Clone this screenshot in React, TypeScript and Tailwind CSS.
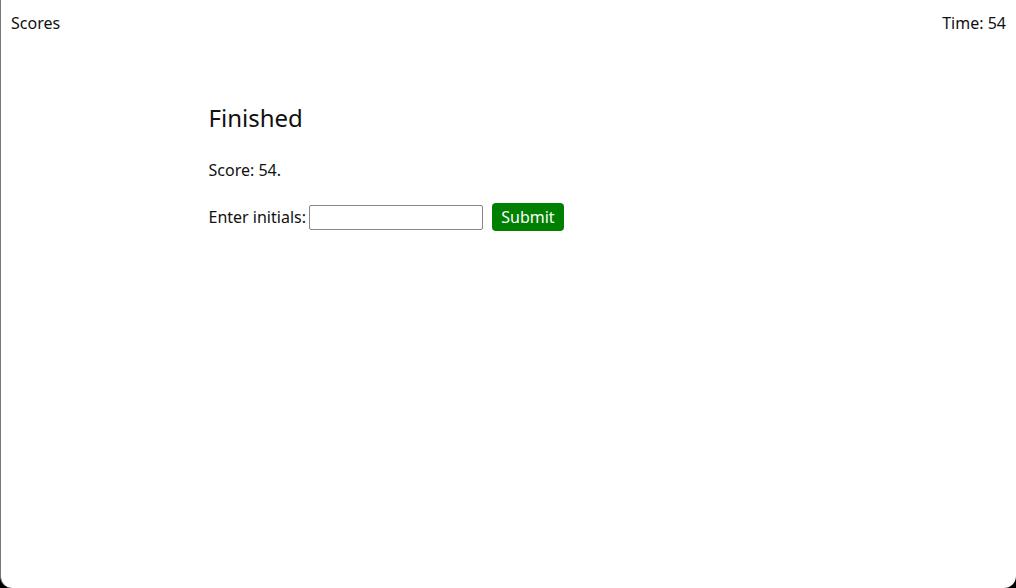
import { useState } from "react";

const App = () => {
    const [initials, setInitials] = useState("");
    const score = 54;

    return (
        <div className="w-[1016px] h-[588px] bg-black" style={{ fontFamily: '"Noto Sans", "Liberation Sans", sans-serif' }}>
            <div className="h-full bg-white rounded-b-[12px] border-l border-[#777] text-[16px] text-[#111]">
                {/* top bar */}
                <header className="flex justify-between items-center px-[10px] pt-[11px]">
                    <span className="cursor-pointer">Scores</span>
                    <span>Time: {score}</span>
                </header>

                <main className="w-[600px] mx-auto pt-[67px]">
                    <h1 className="text-[24px] leading-[32px]">Finished</h1>
                    <p className="mt-[24px]">Score: {score}.</p>
                    <div className="flex items-center mt-[21px]">
                        <label htmlFor="initials">Enter initials:</label>
                        <input
                            id="initials"
                            value={initials}
                            onChange={(e) => setInitials(e.target.value)}
                            className="ml-[3px] w-[174px] h-[25px] border border-[#888] rounded-[2px] px-1"
                        />
                        <button className="ml-[9px] w-[72px] h-[28px] bg-[#008000] text-white rounded-[4px]">
                            Submit
                        </button>
                    </div>
                </main>
            </div>
        </div>
    );
};

export default App;
